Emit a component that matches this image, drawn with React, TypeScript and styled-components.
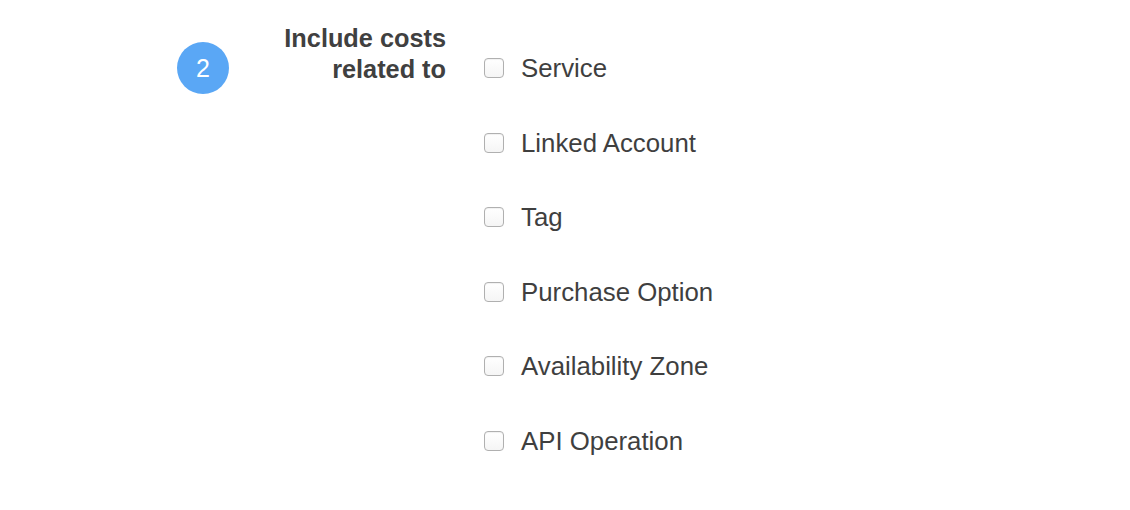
import styled, { createGlobalStyle } from 'styled-components';

const GlobalStyle = createGlobalStyle`
  body {
    margin: 0;
    background: #ffffff;
    font-family: "Liberation Sans", Arial, Helvetica, sans-serif;
  }
`;

const options = [
  'Service',
  'Linked Account',
  'Tag',
  'Purchase Option',
  'Availability Zone',
  'API Operation',
];

export default function App() {
  return (
    <>
      <GlobalStyle />
      <StepSection>
        <StepBadge>2</StepBadge>
        <StepLabel>
          Include costs
          <br />
          related to
        </StepLabel>
        <OptionList>
          {options.map((name) => (
            <OptionRow key={name}>
              <CheckBox type="checkbox" />
              <OptionText>{name}</OptionText>
            </OptionRow>
          ))}
        </OptionList>
      </StepSection>
    </>
  );
}

const StepSection = styled.div`
  display: flex;
  align-items: flex-start;
  padding: 0 0 40px 177px;
`;

const StepBadge = styled.div`
  width: 52px;
  height: 52px;
  margin-top: 42px;
  border-radius: 50%;
  background: #5aa7f5;
  color: #ffffff;
  font-size: 25px;
  display: flex;
  align-items: center;
  justify-content: center;
  flex-shrink: 0;
`;

const StepLabel = styled.div`
  width: 217px;
  margin-top: 23px;
  text-align: right;
  font-size: 25.3px;
  line-height: 31px;
  font-weight: bold;
  color: #404040;
`;

const OptionList = styled.div`
  display: flex;
  flex-direction: column;
  gap: 48.6px;
  margin: 55px 0 0 38px;
`;

const OptionRow = styled.label`
  display: flex;
  align-items: center;
  height: 26px;
  gap: 17px;
`;

const CheckBox = styled.input`
  appearance: none;
  margin: 0;
  width: 20px;
  height: 20px;
  border: 1px solid #b0b0b0;
  border-radius: 4px;
  background: linear-gradient(#ffffff, #f5f5f5);
  box-shadow: inset 0 1px 1px rgba(0, 0, 0, 0.06);
  box-sizing: border-box;
  flex-shrink: 0;
`;

const OptionText = styled.span`
  font-size: 25.8px;
  line-height: 26px;
  color: #3f3f3f;
`;
